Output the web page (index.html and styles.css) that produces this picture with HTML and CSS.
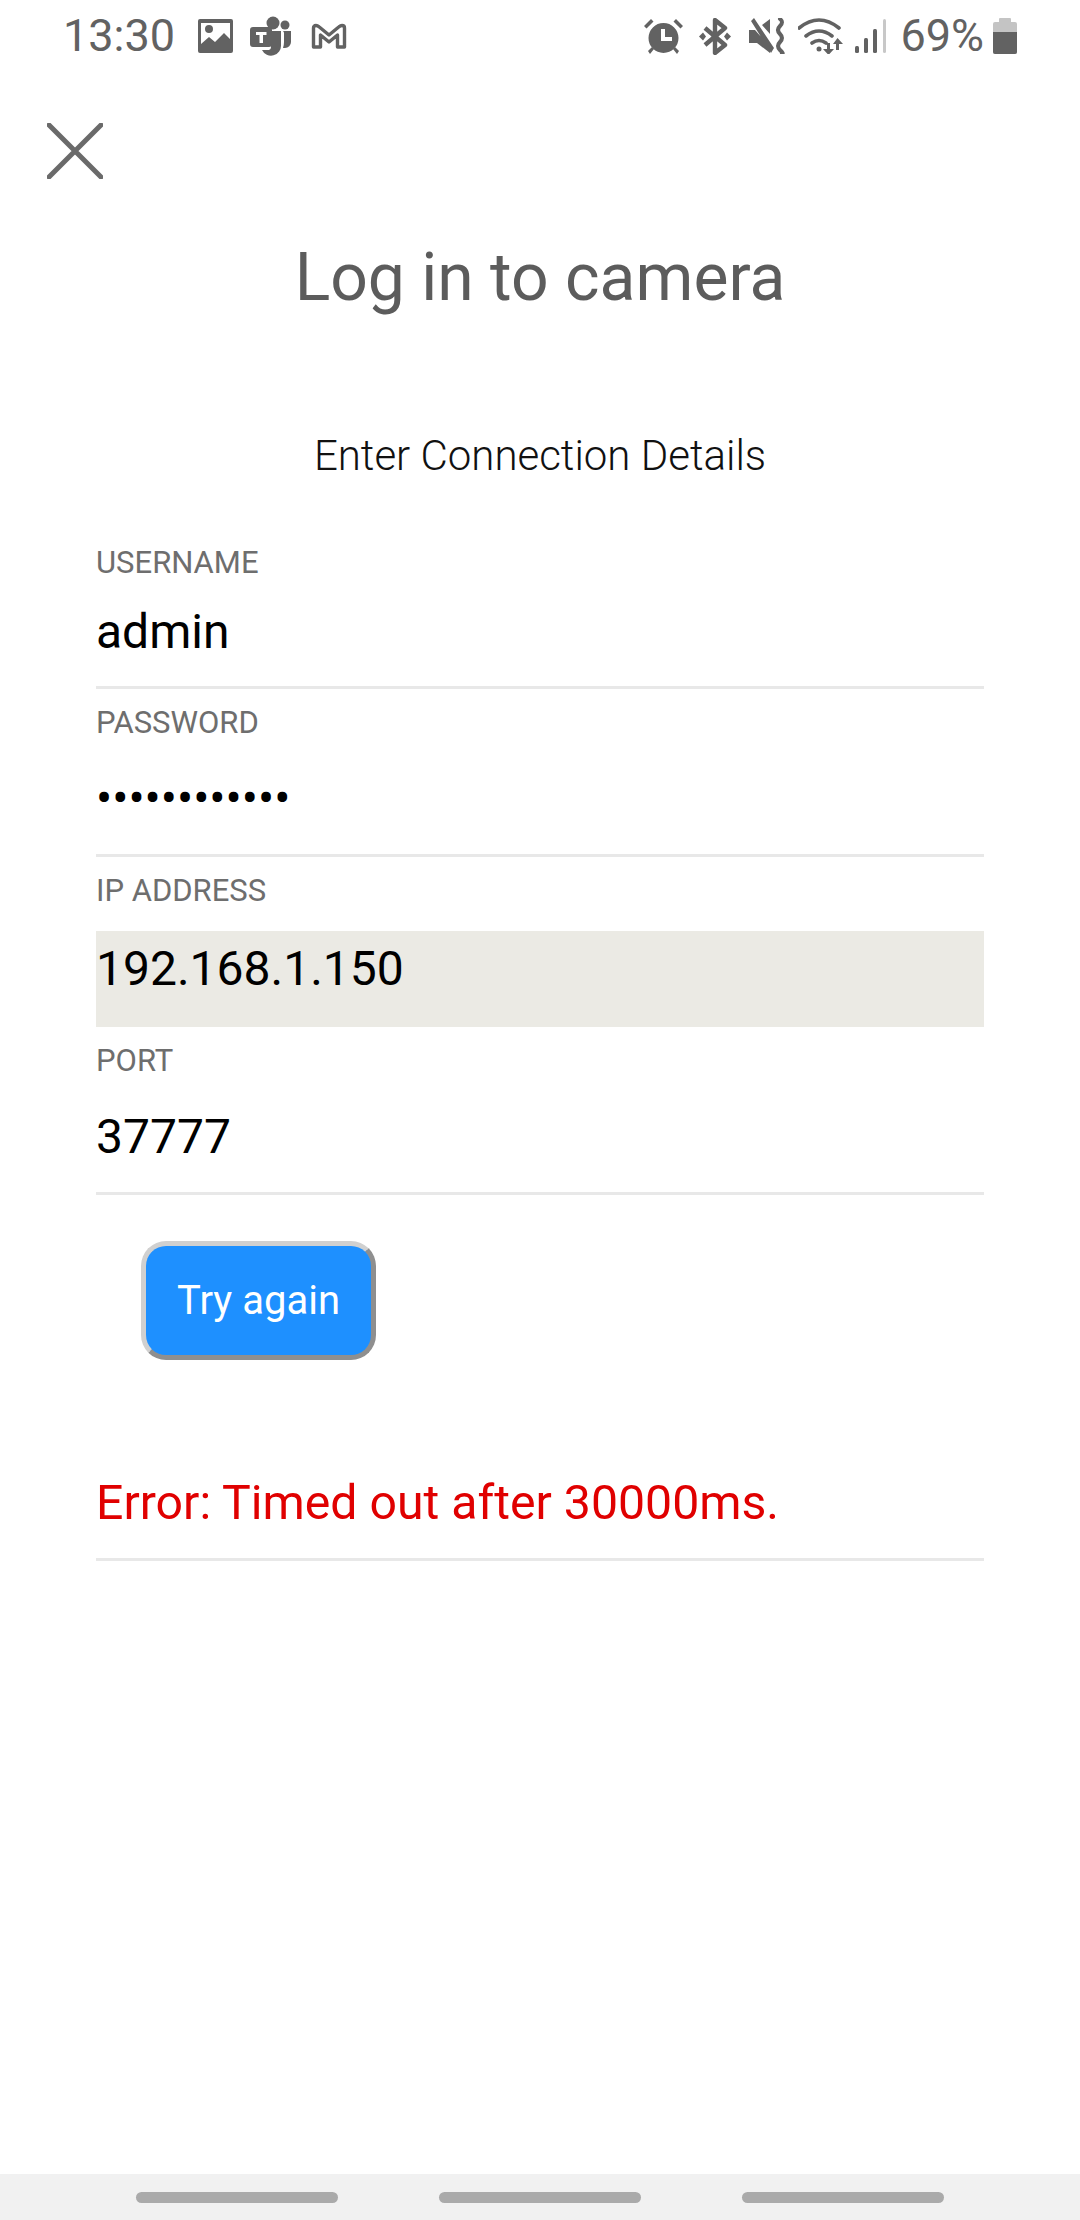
FILE: index.html
```html
<!DOCTYPE html>
<html lang="en">
<head>
    <meta charset="UTF-8">
    <meta name="viewport" content="width=device-width, initial-scale=1.0">
    <title>Log in to camera</title>
    <link rel="stylesheet" href="styles.css">
</head>
<body>

    <!-- Status bar -->
    <div class="status-bar">
        <div class="status-left">
            <span class="clock">13:30</span>
            <svg class="icon icon-image" viewBox="0 0 35 34"><path fill-rule="evenodd" d="M2 0h31a2 2 0 0 1 2 2v30a2 2 0 0 1-2 2H2a2 2 0 0 1-2-2V2a2 2 0 0 1 2-2zM3 4v21l8-7 6 5 9-9 6 6V4zM11 6a4 4 0 1 1 0 8 4 4 0 0 1 0-8z"/></svg>
            <svg class="icon icon-teams" viewBox="0 0 42 40"><circle cx="23" cy="7" r="6.5"/><circle cx="35" cy="9" r="4.5"/><path d="M27 15h14v11a6 6 0 0 1-6 6h-2q1-3 1-6V17q0-1-1-2z"/><path d="M21 15h10v14a10 10 0 0 1-19 5h7a3 3 0 0 0 2-3z"/><path fill-rule="evenodd" d="M3 11h16a3 3 0 0 1 3 3v14a3 3 0 0 1-3 3H3a3 3 0 0 1-3-3V14a3 3 0 0 1 3-3zM6 16v3h3.500v8h3.500v-8h3.500v-3z"/></svg>
            <svg class="icon icon-mail" viewBox="0 0 36 26"><path d="M2.500 24V5q0-2.500 2.500-2.500 1.500 0 3 1.300L18 12 28 3.800q1.500-1.300 3-1.300 2.500 0 2.500 2.500v19h-7V12L18 19 9.500 12v12z" fill="none" stroke-width="3.400" stroke-linejoin="round"/></svg>
        </div>
        <div class="status-right">
            <svg class="icon icon-alarm" viewBox="0 0 39 36"><path fill-rule="evenodd" d="M19.500 5a15 15 0 1 1 0 30 15 15 0 0 1 0-30zM17 11v12h11v-4h-7v-8z"/><path d="M0 8l7-7 2.500 2.500-7 7zM39 8l-7-7-2.500 2.500 7 7zM4 33l4-4 2 2-4 5zM35 33l-4-4-2 2 4 5z"/></svg>
            <svg class="icon icon-bt" viewBox="0 0 32 37"><path d="M6 10l20 17-10 8V2l10 8L6 27" fill="none" stroke-width="4.400" stroke-linejoin="round"/><path d="M0 18.500l4-4 3 4-3 4zM32 18.500l-4-4-3 4 3 4z"/></svg>
            <svg class="icon icon-mute" viewBox="0 0 37 36"><path d="M0 12h6l15 17v6L8 25H0zM13 7l8-6v15zM2 3l3-3 20 30-3 5z"/><path d="M31 1q4 3 0 7t0 8 0 8 0 8 2 3" fill="none" stroke-width="4" stroke-linecap="round"/></svg>
            <svg class="icon icon-wifi" viewBox="0 0 48 36"><path d="M1 10q20-16 40 0M8 18q13-10 26 0M14 25q7-5 14 0" fill="none" stroke-width="3.600" stroke-linecap="round"/><circle cx="21" cy="31" r="2.500"/><path d="M29 25h3v6h4l-5.500 6-5.500-6h4zM41 32h-3v-6h-3l4.500-6 5.500 6h-4z"/></svg>
            <svg class="icon icon-signal" viewBox="0 0 32 34"><rect x="0" y="27" width="4" height="7" rx="1.500"/><rect x="9" y="19" width="4" height="15" rx="1.500"/><rect x="18" y="10" width="4" height="24" rx="1.500"/><rect class="signal-off" x="28" y="0" width="3" height="34" rx="1.500"/></svg>
            <span class="battery-text">69%</span>
            <div class="battery">
                <div class="battery-cap"></div>
                <div class="battery-body"><div class="battery-level"></div></div>
            </div>
        </div>
    </div>

    <!-- Close button -->
    <div class="close">
        <svg viewBox="0 0 56 56"><path d="M2 2l52 52M54 2L2 54" fill="none" stroke-width="5" stroke-linecap="round"/></svg>
    </div>

    <h1>Log in to camera</h1>
    <p class="subtitle">Enter Connection Details</p>

    <div class="form">
        <div class="field field-username">
            <div class="label">USERNAME</div>
            <div class="value">admin</div>
        </div>
        <div class="field">
            <div class="label">PASSWORD</div>
            <div class="value">••••••••••••</div>
        </div>
        <div class="field field-focus">
            <div class="label">IP ADDRESS</div>
            <div class="value">192.168.1.150</div>
        </div>
        <div class="field">
            <div class="label">PORT</div>
            <div class="value">37777</div>
        </div>

        <button class="try-btn">Try again</button>

        <div class="error">Error: Timed out after 30000ms.</div>
    </div>

    <!-- Bottom nav bar -->
    <div class="nav-bar">
        <div class="nav-pill"></div>
        <div class="nav-pill"></div>
        <div class="nav-pill"></div>
    </div>

</body>
</html>
```

FILE: styles.css
```css
html, body {
    margin: 0;
    padding: 0;
}

body {
    width: 1080px;
    height: 2220px;
    overflow: hidden;
    display: flex;
    flex-direction: column;
    background: #fff;
    font-family: Roboto, sans-serif;
    color: #000;
}

/* Status bar */
.status-bar {
    height: 72px;
    display: flex;
    justify-content: space-between;
    align-items: center;
    padding: 0 63px 0 63px;
    color: #626262;
}

.status-left, .status-right {
    display: flex;
    align-items: center;
}

.clock, .battery-text {
    font-size: 45px;
    line-height: 72px;
}

.icon {
    display: block;
    fill: #626262;
    stroke: #626262;
    stroke-width: 0;
}

.icon-image { width: 35px; height: 34px; margin-left: 23px; }
.icon-teams { width: 42px; height: 40px; margin-left: 17px; }
.icon-mail { width: 36px; height: 26px; margin-left: 19px; }
.icon-alarm { width: 39px; height: 36px; }
.icon-bt { width: 32px; height: 37px; margin-left: 16px; }
.icon-mute { width: 37px; height: 36px; margin-left: 18px; }
.icon-wifi { width: 48px; height: 36px; margin-left: 12px; }
.icon-signal { width: 32px; height: 34px; margin-left: 9px; }
.battery-text { margin-left: 13px; }

.signal-off { fill: #c8c8c8; }

.battery {
    width: 24px;
    height: 36px;
    margin-left: 9px;
    display: flex;
    flex-direction: column;
    align-items: center;
}

.battery-cap {
    width: 12px;
    height: 4px;
    background: #c4c4c4;
    border-radius: 1px 1px 0 0;
}

.battery-body {
    flex: 1;
    width: 100%;
    background: #c4c4c4;
    border-radius: 2px;
    display: flex;
    flex-direction: column;
    justify-content: flex-end;
    overflow: hidden;
}

.battery-level {
    height: 69%;
    background: #626262;
}

/* Close */
.close {
    margin: 51px 0 0 47px;
    width: 56px;
    height: 56px;
}

.close svg {
    display: block;
    width: 56px;
    height: 56px;
    stroke: #6a6a6a;
}

h1 {
    margin: 62px 0 0;
    font-size: 66px;
    font-weight: 400;
    line-height: 74px;
    color: #5c5c5c;
    text-align: center;
}

.subtitle {
    margin: 116px 0 0;
    font-size: 42px;
    font-weight: 300;
    line-height: 50px;
    color: #111;
    text-align: center;
}

/* Form */
.form {
    margin: 0 96px;
}

.field {
    height: 168px;
    box-sizing: border-box;
    border-bottom: 3px solid #e8e8e8;
    display: flex;
    flex-direction: column;
}

.label {
    font-size: 31px;
    line-height: 36px;
    color: #6e6e6e;
    margin-top: 16px;
}

.value {
    font-size: 48px;
    line-height: 54px;
    padding-top: 31px;
    flex: 1;
}

.field-username {
    height: 208px;
    padding-top: 64px;
}

.field-username .label {
    margin-top: 0;
}

.field-username .value {
    padding-top: 24px;
}

.field-focus {
    height: 170px;
    border-bottom: none;
}

.field-focus .value {
    background: #ebeae4;
    margin-top: 22px;
    padding-top: 11px;
}

/* Button */
.try-btn {
    display: block;
    margin: 46px 0 0 45px;
    width: 235px;
    height: 119px;
    border: 5px solid;
    border-color: #d0d0d0 #8f8f8f #8f8f8f #d0d0d0;
    border-radius: 25px;
    background: #1e90ff;
    color: #fff;
    font-family: Roboto, sans-serif;
    font-size: 40px;
    padding: 0;
}

.error {
    margin-top: 116px;
    padding-bottom: 28px;
    border-bottom: 3px solid #e8e8e8;
    font-size: 48.2px;
    line-height: 54px;
    color: #e00000;
}

/* Nav bar */
.nav-bar {
    margin-top: auto;
    height: 46px;
    background: #f1f1f1;
    display: flex;
    justify-content: center;
    gap: 101px;
    padding-top: 18px;
    box-sizing: border-box;
}

.nav-pill {
    width: 202px;
    height: 11px;
    border-radius: 6px;
    background: #aaa;
}
```
